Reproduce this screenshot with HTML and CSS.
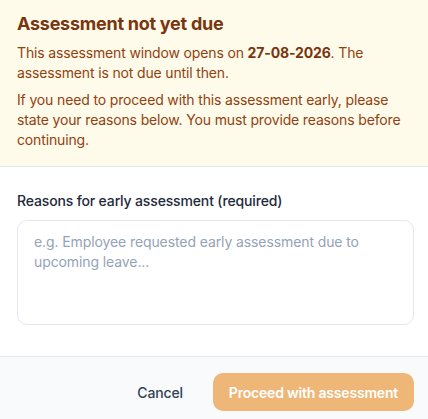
FILE: index.html
```html
<!DOCTYPE html>
<html lang="en">
<head>
<meta charset="utf-8">
<title>Assessment not yet due</title>
<link rel="stylesheet" href="styles.css">
</head>
<body>
<div class="dialog">
  <div class="notice">
    <h2 class="notice-title">Assessment not yet due</h2>
    <p class="notice-text">This assessment window opens on <strong>27-08-2026</strong>. The assessment is not due until then.</p>
    <p class="notice-text">If you need to proceed with this assessment early, please state your reasons below. You must provide reasons before continuing.</p>
  </div>
  <div class="content">
    <label class="field-label" for="reasons">Reasons for early assessment (required)</label>
    <textarea id="reasons" class="field-input" placeholder="e.g. Employee requested early assessment due to upcoming leave..."></textarea>
  </div>
  <div class="footer">
    <button class="btn-cancel" type="button">Cancel</button>
    <button class="btn-primary" type="button" disabled>Proceed with assessment</button>
  </div>
</div>
</body>
</html>
```

FILE: styles.css
```css
* { box-sizing: border-box; }
html, body {
  margin: 0;
  padding: 0;
  background: #ffffff;
  font-family: Inter, "Noto Sans", sans-serif;
  -webkit-font-smoothing: antialiased;
}
.dialog {
  width: 428px;
  min-height: 419px;
  display: flex;
  flex-direction: column;
  background: #ffffff;
}
.notice {
  background: #fffbeb;
  border-bottom: 1px solid #e2e8f0;
  padding: 10px 14px 16px 17px;
}
.notice-title {
  margin: 0 0 5px 0;
  font-size: 18px;
  line-height: 28px;
  font-weight: 700;
  letter-spacing: -0.25px;
  color: #78350f;
}
.notice-text {
  margin: 0;
  font-size: 14px;
  line-height: 20px;
  letter-spacing: -0.15px;
  color: #92400e;
}
.notice-text + .notice-text { margin-top: 7px; }
.notice-text strong { font-weight: 700; color: #78350f; }
.content {
  padding: 24px 14px 31px 17px;
  display: flex;
  flex-direction: column;
}
.field-label {
  font-size: 14px;
  line-height: 20px;
  font-weight: 500;
  letter-spacing: -0.15px;
  color: #1e293b;
  margin-bottom: 9px;
}
.field-input {
  display: block;
  width: 100%;
  height: 105px;
  resize: none;
  border: 1px solid #e2e8f0;
  border-radius: 10px;
  padding: 11px 16px;
  font-family: Inter, "Noto Sans", sans-serif;
  font-size: 14px;
  line-height: 20px;
  letter-spacing: -0.1px;
  color: #1e293b;
  background: #ffffff;
  outline: none;
}
.field-input::placeholder { color: #94a3b8; }
.footer {
  flex: 1;
  background: #f8fafc;
  border-top: 1px solid #e2e8f0;
  padding: 16px 14px 10px 17px;
  display: flex;
  justify-content: flex-end;
  align-items: flex-start;
  gap: 14px;
}
.btn-cancel {
  height: 38px;
  padding: 0 16px;
  border: none;
  background: transparent;
  font-family: Inter, "Noto Sans", sans-serif;
  font-size: 14px;
  font-weight: 500;
  letter-spacing: -0.15px;
  color: #334155;
}
.btn-primary {
  height: 38px;
  padding: 0 16px;
  border: none;
  border-radius: 10px;
  background: #eeb677;
  color: #ffffff;
  font-family: Inter, "Noto Sans", sans-serif;
  font-size: 14px;
  font-weight: 600;
  letter-spacing: -0.2px;
}
```
